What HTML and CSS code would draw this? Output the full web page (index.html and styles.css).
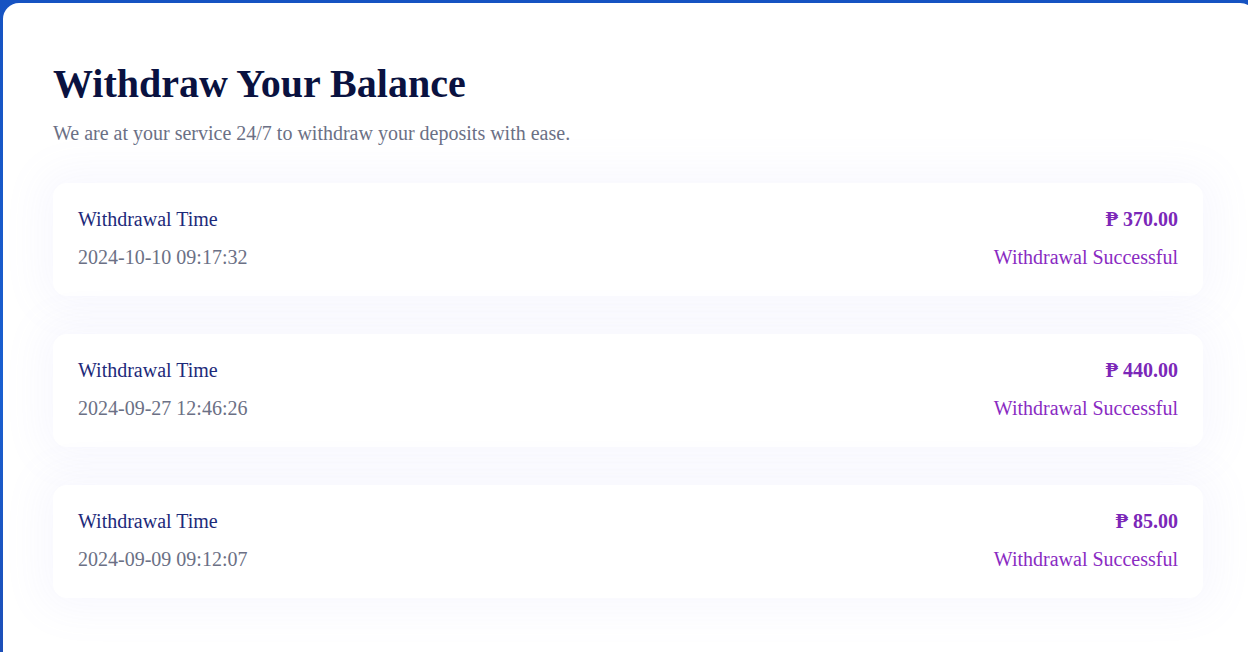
FILE: index.html
```html
<!DOCTYPE html>
<html lang="en">
<head>
<meta charset="utf-8">
<title>Withdraw Your Balance</title>
<link rel="stylesheet" href="styles.css">
</head>
<body>
<main class="panel">
  <header class="head">
    <h1 class="title">Withdraw Your Balance</h1>
    <p class="subtitle">We are at your service 24/7 to withdraw your deposits with ease.</p>
  </header>
  <section class="list">
    <article class="card">
      <div class="row"><span class="label">Withdrawal Time</span><span class="amount">₱ 370.00</span></div>
      <div class="row"><span class="date">2024-10-10 09:17:32</span><span class="status">Withdrawal Successful</span></div>
    </article>
    <article class="card">
      <div class="row"><span class="label">Withdrawal Time</span><span class="amount">₱ 440.00</span></div>
      <div class="row"><span class="date">2024-09-27 12:46:26</span><span class="status">Withdrawal Successful</span></div>
    </article>
    <article class="card">
      <div class="row"><span class="label">Withdrawal Time</span><span class="amount">₱ 85.00</span></div>
      <div class="row"><span class="date">2024-09-09 09:12:07</span><span class="status">Withdrawal Successful</span></div>
    </article>
  </section>
</main>
</body>
</html>
```
FILE: styles.css
```css
html, body {
  margin: 0;
  padding: 0;
  height: 100%;
  overflow: hidden;
}
body {
  background: linear-gradient(180deg, #1653c2 0%, #1a5fd0 60%, #1c4fb8 100%);
  font-family: "Liberation Serif", "Times New Roman", serif;
}
.panel {
  background: #ffffff;
  margin: 3px -8px 0 3px;
  border-radius: 16px 16px 0 0;
  height: calc(100vh - 3px);
  overflow: hidden;
  padding: 0 53px 0 50px;
  box-sizing: border-box;
}
.head {
  padding-top: 57px;
}
.title {
  margin: 0;
  font-size: 40px;
  line-height: 48px;
  font-weight: 700;
  color: #0a1240;
}
.subtitle {
  margin: 13px 0 0;
  font-size: 20px;
  line-height: 24px;
  color: #6b7085;
}
.list {
  margin-top: 38px;
  display: flex;
  flex-direction: column;
  gap: 38px;
  padding-bottom: 60px;
}
.card {
  background: #ffffff;
  border-radius: 14px;
  padding: 23px 25px 26px;
  display: flex;
  flex-direction: column;
  gap: 12px;
  box-shadow: 0 0 40px 14px rgba(130, 130, 235, 0.06);
}
.row {
  display: flex;
  justify-content: space-between;
  align-items: center;
  font-size: 20px;
  line-height: 26px;
}
.label {
  color: #1d2a7a;
}
.date {
  color: #6b7085;
}
.amount {
  color: #7b27b8;
  font-weight: 700;
}
.status {
  color: #8a2bc2;
}
```
